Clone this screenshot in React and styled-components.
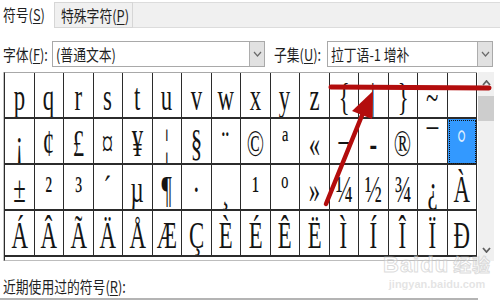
import React from 'react';
import styled, { createGlobalStyle } from 'styled-components';

const GlobalStyle = createGlobalStyle`
  html, body {
    margin: 0;
    padding: 0;
    background: #fff;
  }
  body {
    width: 500px;
    height: 300px;
    overflow: hidden;
    font-family: "Noto Sans CJK SC", "Noto Sans", sans-serif;
  }
`;

const Dialog = styled.div`
  position: relative;
  width: 500px;
  height: 300px;
  display: flex;
  flex-direction: column;
  background: #fff;
  color: #1a1a1a;
`;

const Text = styled.span`
  display: inline-block;
  font-size: 16px;
  line-height: 20px;
  white-space: nowrap;
  transform: scaleX(0.8);
  transform-origin: left center;
  color: #1f1f1f;

  u {
    text-decoration: underline;
    text-underline-offset: 2px;
  }
`;

const TabBar = styled.div`
  display: flex;
  height: 28px;
`;

const Tab = styled.div`
  flex: none;
  width: ${p => p.$width}px;
  box-sizing: border-box;
  display: flex;
  align-items: center;
  padding-left: ${p => (p.$active ? 3 : 6)}px;
  margin-top: ${p => (p.$active ? 0 : 2)}px;
  background: ${p => (p.$active ? '#fff' : '#f0f0f0')};
  border: ${p => (p.$active ? 'none' : '1px solid #d6d6d6')};
`;

const TabFiller = styled.div`
  flex: 1;
  margin-top: 2px;
  background: #f0f0f0;
  border-top: 1px solid #dcdcdc;
  border-bottom: 1px solid #dcdcdc;
`;

const FontRow = styled.div`
  display: flex;
  align-items: center;
  height: 27px;
  margin-top: 13px;
  padding-left: 3px;
`;

const Label = styled.div`
  flex: none;
  width: ${p => p.$width}px;
  margin-left: ${p => p.$gap || 0}px;
  display: flex;
  align-items: center;
`;

const Select = styled.div`
  flex: none;
  width: ${p => p.$width}px;
  height: 100%;
  box-sizing: border-box;
  display: flex;
  align-items: center;
  border: 1px solid #a9a9a9;
  background: #fff;
  padding-left: 3px;
`;

const SelectValue = styled.div`
  flex: 1;
  overflow: hidden;
`;

const DropButton = styled.div`
  flex: none;
  width: 15px;
  height: 100%;
  box-sizing: border-box;
  display: flex;
  align-items: center;
  justify-content: center;
  background: #e1e1e1;
  border-left: 1px solid #adadad;
`;

const GridArea = styled.div`
  display: flex;
  margin-top: 5px;
  padding-left: 4px;
`;

const Grid = styled.div`
  width: 473px;
  display: grid;
  grid-template-columns: repeat(16, 1fr);
  grid-template-rows: repeat(4, 46px);
  box-sizing: border-box;
  border-top: 1px solid #a8a8a8;
  border-bottom: 1px solid #bdbdbd;
  border-left: 1px solid #2b2b2b;
  box-shadow: -1px 0 0 #c4c4c4;
`;

const Cell = styled.div`
  box-sizing: border-box;
  border-right: 1px solid #2b2b2b;
  border-bottom: 2px solid #2b2b2b;
  display: flex;
  justify-content: center;
  overflow: hidden;
  background: ${p => (p.$selected ? '#3399ff' : '#fff')};
  outline: ${p => (p.$selected ? '1px dotted #111' : 'none')};
  outline-offset: -2px;
`;

const Glyph = styled.span`
  display: inline-block;
  font-family: "Liberation Serif", "DejaVu Serif", serif;
  font-size: 38px;
  line-height: 46px;
  padding-top: 1px;
  transform: scaleX(0.6);
  color: ${p => (p.$selected ? '#d8ecff' : '#141414')};
  font-weight: ${p => (p.$bold ? 700 : 400)};
`;

const Scrollbar = styled.div`
  flex: none;
  width: 16px;
  height: 189px;
  margin-left: 1px;
  background: #f0f0f0;
  display: flex;
  flex-direction: column;
  align-items: center;
`;

const ScrollArrow = styled.div`
  height: 22px;
  display: flex;
  align-items: center;
  justify-content: center;
`;

const ScrollThumb = styled.div`
  width: 16px;
  height: 25px;
  margin-top: 2px;
  background: #cdcdcd;
`;

const ScrollSpace = styled.div`
  flex: 1;
`;

const RecentRow = styled.div`
  margin-top: 14px;
  padding-left: 3px;
  height: 22px;
  display: flex;
  align-items: center;
`;

const RecentLine = styled.div`
  width: 478px;
  height: 2px;
  margin-top: 1px;
  background: #b4b4b4;
`;

const Annotation = styled.svg`
  position: absolute;
  left: 0;
  top: 0;
  pointer-events: none;
`;

const Watermark = styled.div`
  position: absolute;
  left: 383px;
  top: 252px;
  display: flex;
  flex-direction: column;
  align-items: center;
  pointer-events: none;
  color: rgba(255, 255, 255, 0.35);
`;

const WatermarkLogo = styled.div`
  font-family: "Liberation Sans", Arial, sans-serif;
  font-weight: 700;
  font-size: 22px;
  line-height: 24px;
  -webkit-text-stroke: 1px rgba(190, 190, 190, 0.55);
  letter-spacing: 1px;

  span {
    font-family: "Noto Sans CJK SC", sans-serif;
    font-size: 18px;
    margin-left: 4px;
  }
`;

const WatermarkUrl = styled.div`
  font-family: "Liberation Sans", Arial, sans-serif;
  font-weight: 700;
  font-size: 11px;
  line-height: 14px;
  color: rgba(210, 210, 210, 0.6);
`;

const rows = [
  ['p', 'q', 'r', 's', 't', 'u', 'v', 'w', 'x', 'y', 'z', '{', '|', '}', '~', ''],
  ['¡', '¢', '£', '¤', '¥', '¦', '§', '¨', '©', 'ª', '«', '¬', '-', '®', '¯', '°'],
  ['±', '²', '³', '´', 'µ', '¶', '·', '¸', '¹', 'º', '»', '¼', '½', '¾', '¿', 'À'],
  ['Á', 'Â', 'Ã', 'Ä', 'Å', 'Æ', 'Ç', 'È', 'É', 'Ê', 'Ë', 'Ì', 'Í', 'Î', 'Ï', 'Ð'],
];

const Chevron = ({ up, color = '#6b6b6b', width = 1.2 }) => (
  <svg width="9" height="6" viewBox="0 0 9 6">
    <polyline
      points={up ? '1,5 4.5,1 8,5' : '1,1 4.5,5 8,1'}
      fill="none"
      stroke={color}
      strokeWidth={width}
    />
  </svg>
);

const App = () => {
  return (
    <Dialog>
      <GlobalStyle />
      <TabBar>
        <Tab $active $width={54}>
          <Text>符号(<u>S</u>)</Text>
        </Tab>
        <Tab $width={79}>
          <Text>特殊字符(<u>P</u>)</Text>
        </Tab>
        <TabFiller />
      </TabBar>

      <FontRow>
        <Label $width={49}>
          <Text>字体(<u>F</u>):</Text>
        </Label>
        <Select $width={213}>
          <SelectValue>
            <Text>(普通文本)</Text>
          </SelectValue>
          <DropButton>
            <Chevron />
          </DropButton>
        </Select>
        <Label $width={53} $gap={9}>
          <Text>子集(<u>U</u>):</Text>
        </Label>
        <Select $width={166}>
          <SelectValue>
            <Text>拉丁语-1 增补</Text>
          </SelectValue>
          <DropButton>
            <Chevron />
          </DropButton>
        </Select>
      </FontRow>

      <GridArea>
        <Grid>
          {rows.map((row, r) =>
            row.map((ch, c) => {
              const selected = r === 1 && c === 15;
              return (
                <Cell key={`${r}-${c}`} $selected={selected}>
                  <Glyph $selected={selected} $bold={r === 1 && c === 12}>
                    {ch}
                  </Glyph>
                </Cell>
              );
            })
          )}
        </Grid>
        <Scrollbar>
          <ScrollArrow>
            <Chevron up color="#606060" width={1.8} />
          </ScrollArrow>
          <ScrollThumb />
          <ScrollSpace />
          <ScrollArrow>
            <Chevron color="#606060" width={1.8} />
          </ScrollArrow>
        </Scrollbar>
      </GridArea>

      <RecentRow>
        <Text>近期使用过的符号(<u>R</u>):</Text>
      </RecentRow>
      <RecentLine />

      <Watermark>
        <WatermarkLogo>
          Baidu<span>经验</span>
        </WatermarkLogo>
        <WatermarkUrl>jingyan.baidu.com</WatermarkUrl>
      </Watermark>

      <Annotation width="500" height="300" viewBox="0 0 500 300">
        <line x1="331" y1="87" x2="489" y2="88" stroke="#b30d0d" strokeWidth="5" strokeLinecap="round" />
        <line x1="326" y1="204" x2="365" y2="108" stroke="#b30d0d" strokeWidth="4.5" strokeLinecap="round" />
        <polygon points="373,91 352,111 372,119" fill="#b30d0d" />
      </Annotation>
    </Dialog>
  );
};

export default App;
